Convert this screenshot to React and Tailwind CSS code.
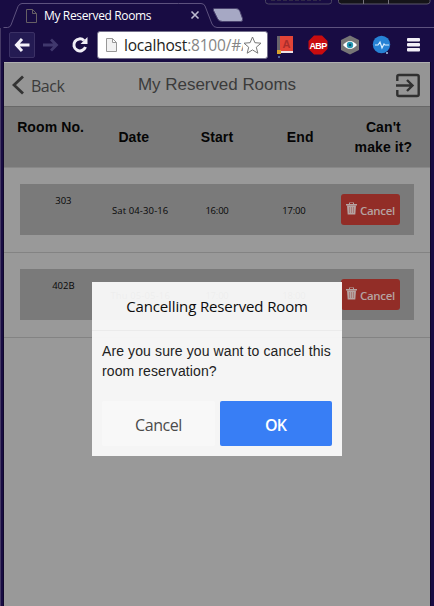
import React from 'react';

const SEGOE = "font-['Open_Sans','Noto_Sans',sans-serif]";
const ARIAL = "font-['Liberation_Sans',Arial,sans-serif]";

function PageIcon({ className, fill, stroke }) {
  return (
    <svg className={className} viewBox="0 0 11 14" fill={fill} stroke={stroke}>
      <path d="M.5.5h6l4 4v9H.5zM6.5.5v4h4" />
    </svg>
  );
}

function TabStrip() {
  return (
    <div className="relative h-7 w-full">
      <svg className="absolute inset-0" width="434" height="28" fill="none">
        <path d="M3.500 27.500h4q2.500 0 3.500-2.500L18 6.500Q19.500 3.500 22 3.500h154q3 0 4 0h21q3 0 4 2.500l7 18q1.500 3.500 5 3.500h217" stroke="#5d527e" />
        <path d="M214 8.500h22q3 0 4 3l2.500 7q1 3-2 3h-18q-4 0-5-3l-4-8q-.5-2 .5-2z" fill="#a6a8c4" stroke="#4a426e" />
        <path d="M265.500 0v1.500q0 2.500 3 2.500H329q2.500 0 2.500-2.500V0" stroke="#4b4762" />
        <path d="M271 0h50" stroke="#49464f" strokeDasharray="4 2" />
        <path d="M338.500 0v1.500q0 2.500 3 2.500H427q3 0 3-2.500V0" fill="#151419" stroke="#5b566a" />
        <path d="M363.500 0v4M388.500 0v4" stroke="#77737e" />
        <path d="M191.500 11.500l7 7m0-7l-7 7" stroke="#bdbad0" strokeWidth="1.600" />
      </svg>
      <div className="flex h-7 items-center pl-[26px] pt-[3px]">
        <PageIcon className="h-[14px] w-[11px]" fill="none" stroke="#665f64" />
        <span className={`${SEGOE} ml-[7px] w-[112px] whitespace-nowrap text-[12px] font-medium leading-4 tracking-[-0.36px] text-white`}>My Reserved Rooms</span>
      </div>
    </div>
  );
}

function Toolbar() {
  return (
    <div className="flex h-[34px] items-center pl-[9px]">
      <div className="flex h-[26px] w-[26px] items-center justify-center rounded-[2px] border border-[#3b3165] bg-[#241b53]">
        <svg width="16" height="16" fill="none" stroke="#f4f2fa" strokeWidth="3"><path d="M15.500 8H3M8 2L2.500 8 8 14" /></svg>
      </div>
      <svg className="ml-[7px]" width="17" height="16" fill="none" stroke="#40386d" strokeWidth="2.800"><path d="M1 8h12M9 2.500L14.500 8 9 13.500" /></svg>
      <svg className="ml-[12px]" width="18" height="18" fill="none" stroke="#f0eef6" strokeWidth="3">
        <path d="M14.500 11A6 6 0 1 1 13 4.500" />
        <path d="M16.500 1v7h-7z" fill="#f0eef6" stroke="none" />
      </svg>
      <div className="ml-[8px] flex h-[28px] w-[171px] items-center rounded-[3px] border border-[#74708c] bg-white pl-[8px]">
        <PageIcon className="h-[14px] w-[11px] shrink-0" fill="#f2f2f2" stroke="#989898" />
        <span className={`${SEGOE} ml-[7px] w-[119px] shrink-0 whitespace-nowrap text-[15.500px] leading-5 tracking-[-0.2px] text-[#222]`}>
          localhost<span className="text-[#858585]">:8100/#/</span>
        </span>
        <svg className="relative shrink-0" width="19" height="18" viewBox="0 0 19 18" fill="#fff" stroke="#777">
          <path d="M0 0h19v10H2v8H0z" stroke="none" />
          <path d="M9.500 1l2.400 5.700 6.100.5-4.700 4 1.500 6-5.300-3.300-5.300 3.300 1.500-6-4.700-4 6.100-.5z" />
        </svg>
      </div>
      <svg className="ml-[8px] shrink-0" width="18" height="26" viewBox="0 0 18 26">
        <path d="M1 4h4v15H1z" fill="#68646b" />
        <path d="M4 4h13v15H4z" fill="#e34437" />
        <path d="M4 19h13v2H4z" fill="#ede3e5" />
        <text x="10.500" y="15.500" textAnchor="middle" fontFamily="Liberation Sans" fontWeight="bold" fontSize="11" fill="#a92e2c">A</text>
        <path d="M1 18h4v4H1z" fill="#d7a22c" />
        <circle cx="3" cy="25" r="1" fill="#6383bc" />
      </svg>
      <svg className="ml-[14px] shrink-0" width="20" height="20">
        <path d="M6 .5h8L19.500 6v8L14 19.500H6L.5 14V6z" fill="#c90c0f" />
        <text x="10" y="13.500" textAnchor="middle" letterSpacing="-0.600" fontFamily="Liberation Sans" fontWeight="bold" fontSize="9" fill="#fff">ABP</text>
      </svg>
      <svg className="ml-[12px] shrink-0" width="20" height="20">
        <path d="M10 .5L19 5v10l-9 4.500L1 15V5z" fill="#777676" />
        <path d="M3 10q7-8 14 0-7 8-14 0" fill="#fff" />
        <circle cx="10" cy="10" r="3.200" fill="#269ab4" /><circle cx="10" cy="10" r="1.300" fill="#164d68" />
      </svg>
      <svg className="ml-[12px] shrink-0" width="20" height="20">
        <circle cx="9.500" cy="9.500" r="8.700" fill="#2682d5" />
        <path d="M3 10h3l2-3 2 6 2-4 1 1h4" fill="none" stroke="#d9efff" strokeWidth="1.200" />
        <circle cx="15" cy="18" r="1" fill="#a6c9ec" />
      </svg>
      <svg className="ml-[15px] shrink-0" width="13" height="14" fill="#f1eff7">
        <rect width="13" height="3.500" rx="1" /><rect y="5" width="13" height="3.500" rx="1" /><rect y="10" width="13" height="3.500" rx="1" />
      </svg>
    </div>
  );
}

function TrashIcon() {
  return (
    <svg width="11" height="13" viewBox="0 0 11 13" fill="none" className="shrink-0">
      <path d="M0 3.500V2h3V.5h5V2h3v1.500z" fill="#b5a3a1" />
      <path d="M4 1.500h3" stroke="#922d27" />
      <path d="M1 3.500h9l-.7 9H1.700z" fill="#b5a3a1" />
      <path d="M3.500 5v6M5.500 5v6M7.500 5v6" stroke="#963f38" strokeWidth=".4" />
    </svg>
  );
}

function Reservation({ room, date, start, end }) {
  return (
    <div className="h-[85px] border-b border-[#838383] px-4 pt-4">
      <div className={`${SEGOE} grid h-[51px] grid-cols-5 bg-[#7a7a7a] px-[5px] text-center text-[9.500px] leading-[14px] text-[#080808]`}>
        <span className="pt-[10px]">{room}</span>
        <span className="whitespace-nowrap pt-5 tracking-[0.12px]">{date}</span>
        <span className="pt-5 tracking-[-0.2px]">{start}</span>
        <span className="pt-5 tracking-[-0.2px]">{end}</span>
        <div className="flex justify-center pt-[10px]">
          <button className="flex h-[31px] w-[59px] shrink-0 items-center rounded-[3px] bg-[#922d27] pl-[5px] text-[#b5a3a1]">
            <span className="pb-[2px]"><TrashIcon /></span>
            <span className="ml-[3px] mt-[2px] text-[11.500px] font-semibold leading-4 tracking-[-0.35px]">Cancel</span>
          </button>
        </div>
      </div>
    </div>
  );
}

function Dialog() {
  return (
    <div className="absolute left-[92px] top-[282px] h-[174px] w-[250px] bg-[#fafafa]/95">
      <div className={`${SEGOE} h-[49px] border-b border-[#ebebeb] pt-[14px] text-center text-[15px] leading-5 tracking-[-0.13px] text-[#0c0c0c]`}>
        <h3 className="whitespace-nowrap">Cancelling Reserved Room</h3>
      </div>
      <p className={`${ARIAL} h-[70px] whitespace-nowrap px-[10px] pt-[10px] text-[14px] leading-5 tracking-[0.11px] text-[#222]`}>
        Are you sure you want to cancel this<br />room reservation?
      </p>
      <div className={`${SEGOE} flex gap-[5px] px-[10px] text-[16px]`}>
        <button className="h-[45px] w-[113px] rounded-[2px] bg-[#f8f8f8] pt-[2px] tracking-[-0.45px] text-[#4b4b4b]">Cancel</button>
        <button className="h-[45px] w-[112px] rounded-[2px] bg-[#387ef5] pr-px pt-[2px] font-semibold tracking-[-0.9px] text-white">OK</button>
      </div>
    </div>
  );
}

export default function App() {
  return (
    <div className="relative flex h-[606px] w-[434px] flex-col overflow-hidden bg-[#180c43]">
      <TabStrip />
      <Toolbar />
      <main className="ml-[4px] w-[426px] flex-1 border-t border-[#b0b0b0] bg-[#999]">
        <header className="flex h-[44px] items-center border-b border-[#686868] bg-[#959595] text-[#3b3b3b]">
          <svg className="ml-[8px]" width="12" height="20" fill="none" stroke="#333" strokeWidth="2.800"><path d="M11 1.500L2 10l9 8.500" /></svg>
          <span className={`${SEGOE} ml-[7px] mt-[3px] w-[40px] text-[16px] leading-5 tracking-[-0.5px]`}>Back</span>
          <h1 className={`${ARIAL} ml-[67px] w-[160px] whitespace-nowrap text-[17px] leading-5 tracking-[-0.04px]`}>My Reserved Rooms</h1>
          <svg className="ml-[97px] mt-px" width="26" height="25" viewBox="0 0 26 25" fill="none" stroke="#303030" strokeWidth="2.400">
            <path d="M2.300 8V3.500Q2.300 2 4 2h18q1.700 0 1.700 1.500v18q0 1.500-1.700 1.500H4q-1.700 0-1.700-1.500V17M1 12.500h15M12 7l5.500 5.500L12 18" />
          </svg>
        </header>
        <div className={`${ARIAL} grid h-[61px] grid-cols-5 border-b border-[#888] bg-[#797979] pl-[5px] pr-[5px] text-center text-[14px] font-bold leading-5 tracking-[0.1px] text-[#050505]`}>
          <span className="pt-[10px]">Room No.</span>
          <span className="pt-5">Date</span>
          <span className="pt-5">Start</span>
          <span className="pt-5">End</span>
          <span className="pt-[10px]">Can't<br />make it?</span>
        </div>
        <Reservation room="303" date="Sat 04-30-16" start="16:00" end="17:00" />
        <Reservation room="402B" date="Thu 05-05-16" start="17:00" end="18:00" />
      </main>
      <Dialog />
      <div className="absolute bottom-0 left-0 top-7 w-px bg-[#453965]" />
      <div className="absolute bottom-0 left-[3px] top-[62px] w-px bg-[#10072c]" />
      <div className="absolute bottom-0 left-[430px] top-[62px] w-px bg-[#10072c]" />
    </div>
  );
}
